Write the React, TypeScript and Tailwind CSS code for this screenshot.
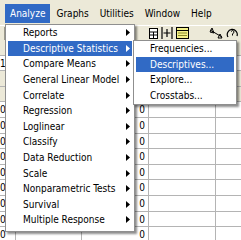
import { ReactNode } from 'react'

const MENU_ITEMS = [
  'Reports',
  'Descriptive Statistics',
  'Compare Means',
  'General Linear Model',
  'Correlate',
  'Regression',
  'Loglinear',
  'Classify',
  'Data Reduction',
  'Scale',
  'Nonparametric Tests',
  'Survival',
  'Multiple Response',
]

const SUB_ITEMS = ['Frequencies...', 'Descriptives...', 'Explore...', 'Crosstabs...']

const TOP_MENUS = ['Analyze', 'Graphs', 'Utilities', 'Window', 'Help']

function Arrow({ white }: { white?: boolean }) {
  return (
    <svg width="4" height="7" viewBox="0 0 4 7" className="ml-auto mr-[2px] shrink-0">
      <path d="M0 0 L4 3.5 L0 7 Z" fill={white ? '#ffffff' : '#000000'} />
    </svg>
  )
}

function Row({ children, gray }: { children?: ReactNode; gray?: boolean }) {
  return (
    <div className={`flex h-[15.6px] border-b border-[#b4b4b4] ${gray ? 'bg-[#ece9d8]' : 'bg-white'}`}>
      {children}
    </div>
  )
}

function DataRow() {
  return (
    <Row>
      <div className="w-[16px] border-r border-[#b4b4b4] leading-[15px]">0</div>
      <div className="w-[66px] border-r border-[#b4b4b4]" />
      <div className="w-[67px] border-r border-[#b4b4b4] text-right pr-[3px] leading-[15px]">0</div>
      <div className="w-[67px] border-r border-[#b4b4b4]" />
      <div className="flex-1" />
    </Row>
  )
}

function Toolbar() {
  return (
    <div className="flex h-[15px] items-center bg-[#ece9d8] border-t border-white">
      <div className="w-[4px] h-[13px] ml-[1px] border-r border-[#9c9a8c]" />
      <div className="flex-1" />
      <div className="flex items-center gap-[3px] pr-[2px]">
        <svg width="9" height="11" viewBox="0 0 9 11">
          <rect x="0.5" y="0.5" width="8" height="10" fill="#fff" stroke="#000" />
          <path d="M0.5 4 H8.5 M0.5 7 H8.5 M4.5 4 V10.5" stroke="#000" />
        </svg>
        <svg width="12" height="12" viewBox="0 0 12 12">
          <path d="M1 0 V12 M11 0 V12 M6 2 V10 M2.5 6 H9.5" stroke="#000" strokeWidth="1.2" />
        </svg>
        <svg width="13" height="12" viewBox="0 0 13 12">
          <rect x="0.5" y="0.5" width="12" height="11" fill="#f4f08a" stroke="#000" />
          <path d="M0.5 3.5 H12.5" stroke="#000" />
          <path d="M2 6 H11 M2 8.5 H11" stroke="#8a8a2a" />
        </svg>
        <div className="w-[14px]" />
        <svg width="14" height="12" viewBox="0 0 14 12">
          <path d="M1 3 L13 10 M3 1 L1 5 L5 6 Z M11 7 L9 11 L13 11 Z" stroke="#000" fill="none" strokeWidth="1" />
        </svg>
        <svg width="13" height="13" viewBox="0 0 13 13">
          <path d="M2 10 A5 5 0 1 1 11 9" stroke="#000" fill="none" strokeWidth="1.2" />
          <path d="M5 4.5 Q6.5 2.5 8 4.5 Q8 6 6.5 7 V8.5" stroke="#000" fill="none" />
        </svg>
      </div>
    </div>
  )
}

export default function App() {
  return (
    <div className="relative w-[241px] h-[240px] overflow-hidden bg-white text-[10px] text-black font-stretch-condensed font-['DejaVu_Sans',sans-serif]">
      {/* Menu bar */}
      <div className="flex h-[25px] items-start pt-[4px] pl-[5px] bg-[#ece9d8]">
        {TOP_MENUS.map((m, i) => (
          <div
            key={m}
            className={`flex h-[19px] items-center px-[5px] mr-[1px] ${i === 0 ? 'bg-[#316ac5] text-white' : ''}`}
          >
            {m}
          </div>
        ))}
      </div>

      <Toolbar />

      {/* Data editor */}
      <div className="flex flex-col">
        <Row gray />
        <Row>
          <div className="w-[16px] leading-[15px]">1</div>
        </Row>
        <Row gray />
        <Row gray>
          <div className="w-[16px] border-r border-[#b4b4b4]" />
          <div className="w-[66px] border-r border-[#b4b4b4]" />
          <div className="w-[67px] border-r border-[#b4b4b4]" />
          <div className="w-[67px] border-r border-[#b4b4b4]" />
        </Row>
        {Array.from({ length: 9 }).map((_, i) => (
          <DataRow key={i} />
        ))}
      </div>

      {/* Analyze dropdown */}
      <div className="absolute left-[5px] top-[24px] w-[130px] flex flex-col bg-white border border-[#8f8f8f] px-[2px] pb-[3px] shadow-[2px_2px_2px_rgba(0,0,0,0.45)]">
        {MENU_ITEMS.map((item, i) => (
          <div
            key={item}
            className={`flex h-[15.6px] items-center pl-[15px] whitespace-nowrap ${i === 1 ? 'bg-[#316ac5] text-white' : ''}`}
          >
            {item}
            <Arrow white={i === 1} />
          </div>
        ))}
      </div>

      {/* Descriptive Statistics submenu */}
      <div className="absolute left-[133px] top-[40px] w-[104px] flex flex-col bg-white border border-[#8f8f8f] px-[2px] pb-[1px] shadow-[2px_2px_2px_rgba(0,0,0,0.45)]">
        {SUB_ITEMS.map((item, i) => (
          <div
            key={item}
            className={`flex h-[15.6px] items-center pl-[14px] whitespace-nowrap ${i === 1 ? 'bg-[#316ac5] text-white' : ''}`}
          >
            {item}
          </div>
        ))}
      </div>
    </div>
  )
}
